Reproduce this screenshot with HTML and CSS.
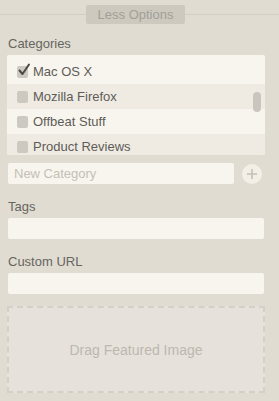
FILE: index.html
```html
<!DOCTYPE html>
<html lang="en">
<head>
  <meta charset="UTF-8" />
  <title>Post Options</title>
  <meta name="viewport" content="width=device-width, initial-scale=1" />
  <link rel="stylesheet" href="styles.css">
</head>
<body>
  <div class="options-toggle">
    <button class="toggle-btn" type="button">Less Options</button>
  </div>
  <div class="panel">
    <div class="field-label">Categories</div>
    <div class="category-list">
      <label class="category-row">
        <span class="check checked">
          <svg width="14" height="14" viewBox="0 0 14 14"><path d="M2.5 7.5 L5.5 11 L12 1.5" fill="none" stroke="#4a4946" stroke-width="2" stroke-linecap="round" stroke-linejoin="round"/></svg>
        </span>
        Mac OS X
      </label>
      <label class="category-row alt"><span class="check"></span>Mozilla Firefox</label>
      <label class="category-row"><span class="check"></span>Offbeat Stuff</label>
      <label class="category-row alt"><span class="check"></span>Product Reviews</label>
      <div class="scroll-thumb"></div>
    </div>
    <div class="new-category">
      <input class="text-input" type="text" placeholder="New Category" />
      <button class="add-btn" type="button">
        <svg width="12" height="12" viewBox="0 0 12 12"><path d="M6 1 V11 M1 6 H11" stroke="#c4c0b7" stroke-width="1.6"/></svg>
      </button>
    </div>
    <div class="field-label spaced">Tags</div>
    <input class="text-input" type="text" />
    <div class="field-label spaced">Custom URL</div>
    <input class="text-input" type="text" />
    <div class="drop-zone">Drag Featured Image</div>
  </div>
</body>
</html>
```

FILE: styles.css
```css
body {
  margin: 0;
  background: #e0dcd2;
  font-family: 'Liberation Sans', Arial, sans-serif;
  font-size: 13px;
  color: #67655f;
}
.options-toggle {
  display: flex;
  align-items: center;
  padding-top: 5px;
  height: 19px;
}
.options-toggle::before,
.options-toggle::after {
  content: "";
  flex: 1;
  height: 1px;
  background: #d3cec4;
}
.options-toggle::before { flex: 0 0 86px; }
.toggle-btn {
  width: 99px;
  height: 19px;
  border: none;
  border-radius: 2px;
  background: #cdc9bf;
  color: #a29f97;
  font-family: inherit;
  font-size: 13px;
  padding: 0;
}
.panel {
  padding: 0 14px 0 8px;
}
.field-label {
  line-height: 16px;
  margin-top: 12px;
  margin-bottom: 3px;
}
.field-label.spaced {
  margin-top: 15px;
}
.category-list {
  position: relative;
  height: 96px;
  padding-top: 4px;
  margin-left: -1px;
  overflow: hidden;
  background: #f8f5ee;
  border-radius: 2px;
}
.category-row {
  display: flex;
  align-items: center;
  height: 25px;
  padding-left: 10px;
  gap: 5px;
  color: #5e5c57;
}
.category-row.alt {
  background: #efebe3;
}
.check {
  position: relative;
  width: 11px;
  height: 12px;
  border-radius: 2px;
  background: #cdc9c0;
}
.check svg {
  position: absolute;
  left: 0;
  top: -3px;
}
.scroll-thumb {
  position: absolute;
  left: 246px;
  top: 37px;
  width: 8px;
  height: 20px;
  border-radius: 4px;
  background: #cac6be;
}
.new-category {
  display: flex;
  align-items: center;
  gap: 8px;
  margin-top: 8px;
}
.new-category .text-input {
  width: 226px;
}
.text-input {
  display: block;
  box-sizing: border-box;
  width: 256px;
  height: 21px;
  border: none;
  border-radius: 2px;
  background: #f8f5ee;
  font-family: inherit;
  font-size: 13px;
  padding: 0 6px;
  color: #5e5c57;
  outline: none;
}
.text-input::placeholder {
  color: #c4c0b7;
}
.add-btn {
  display: flex;
  align-items: center;
  justify-content: center;
  width: 20px;
  height: 20px;
  padding: 0;
  border: none;
  border-radius: 50%;
  background: #f3efe6;
}
.drop-zone {
  display: flex;
  align-items: center;
  justify-content: center;
  box-sizing: border-box;
  width: 258px;
  height: 87px;
  margin: 12px 0 0 -1px;
  border: 2px dashed #d4d0c7;
  background: #e6e2db;
  color: #bcb8b0;
  font-size: 14px;
}
```
